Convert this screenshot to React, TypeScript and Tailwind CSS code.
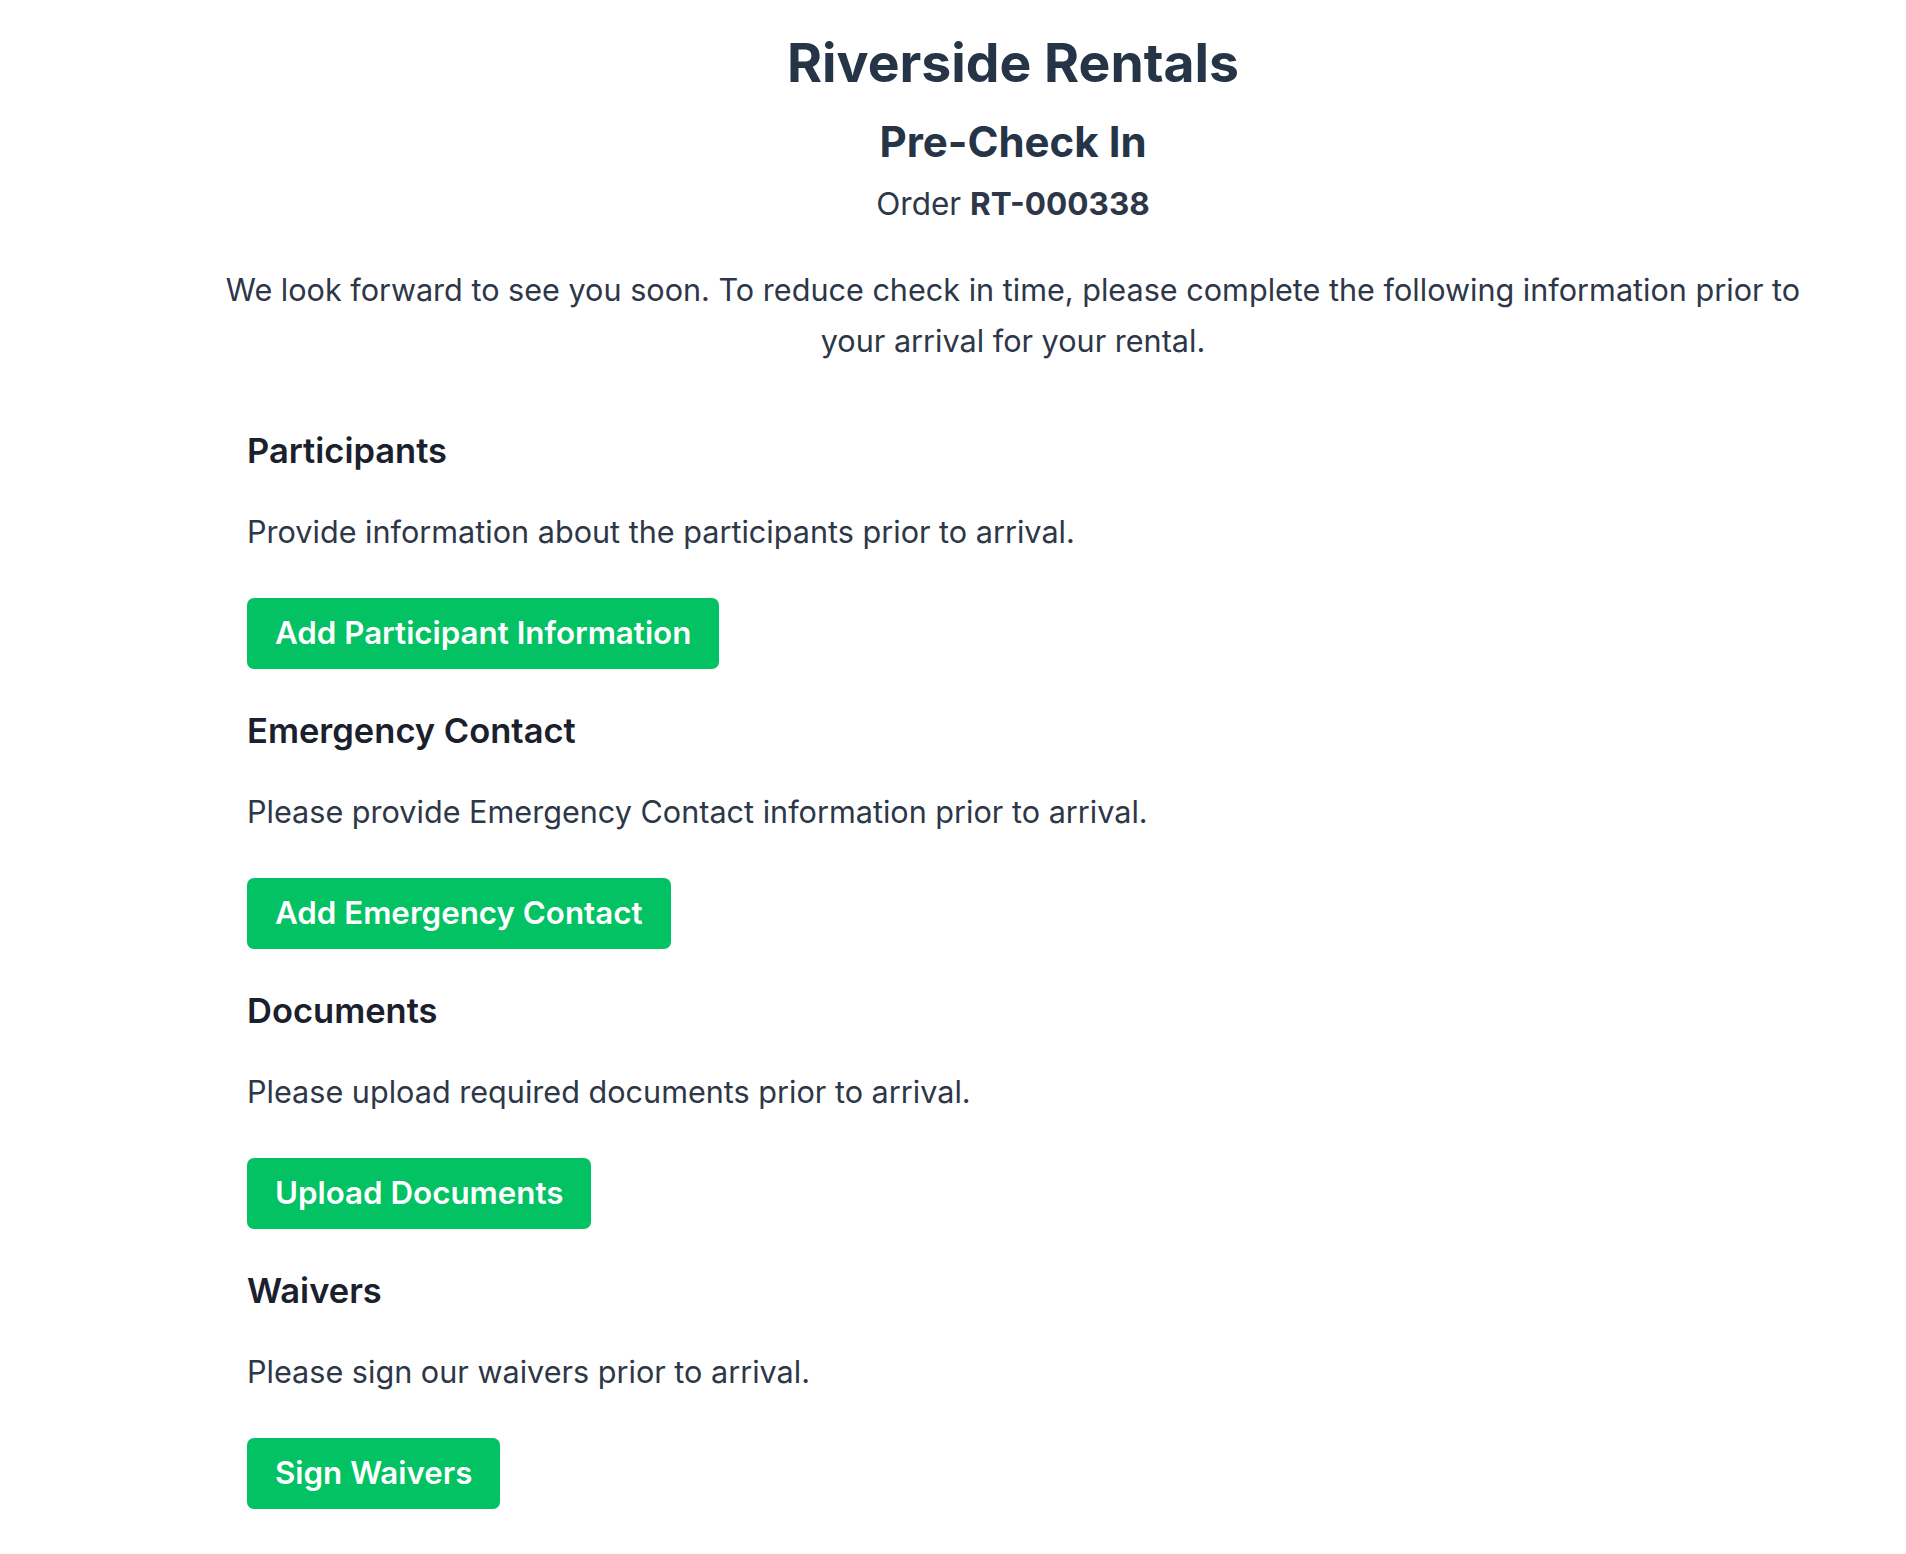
import React from "react";

type Step = {
    title: string;
    text: string;
    action: string;
};

const steps: Step[] = [
    {
        title: "Participants",
        text: "Provide information about the participants prior to arrival.",
        action: "Add Participant Information",
    },
    {
        title: "Emergency Contact",
        text: "Please provide Emergency Contact information prior to arrival.",
        action: "Add Emergency Contact",
    },
    {
        title: "Documents",
        text: "Please upload required documents prior to arrival.",
        action: "Upload Documents",
    },
    {
        title: "Waivers",
        text: "Please sign our waivers prior to arrival.",
        action: "Sign Waivers",
    },
];

const StepBlock = ({ step }: { step: Step }) => {
    return (
        <div className="flex flex-col items-start pb-[42px]">
            <h3 className="text-[34.5px] leading-[40px] font-semibold text-[#1a202c]">{step.title}</h3>
            <p className="mt-[41px] text-[30.6px] leading-[40px] text-[#2d3748]">{step.text}</p>
            <button
                type="button"
                className="mt-[46px] h-[71px] px-[28px] rounded-[7px] bg-[#02c263] text-white text-[31.3px] font-semibold cursor-pointer"
            >
                {step.action}
            </button>
        </div>
    );
};

const App = () => {
    return (
        <div className="min-h-screen bg-white pl-[120px] font-['Inter','Liberation_Sans',sans-serif] text-[#2d3748]">
            <div className="flex flex-col items-center text-center pt-[31px]">
                <h1 className="text-[53.5px] leading-[64px] font-bold text-[#253447]">Riverside Rentals</h1>
                <h2 className="mt-[23px] text-[42px] leading-[48px] font-bold text-[#253447]">Pre-Check In</h2>
                <div className="mt-[18px] text-[31.5px] leading-[40px]">
                    Order <span className="font-bold">RT-000338</span>
                </div>
                <p className="mt-[40px] max-w-[1620px] text-[30.6px] leading-[51px]">
                    We look forward to see you soon. To reduce check in time, please complete the following information prior to your arrival for your rental.
                </p>
            </div>

            <div className="pl-[127px] pt-[65px]">
                {steps.map((step) => (
                    <StepBlock key={step.title} step={step} />
                ))}
            </div>
        </div>
    );
};

export default App;
